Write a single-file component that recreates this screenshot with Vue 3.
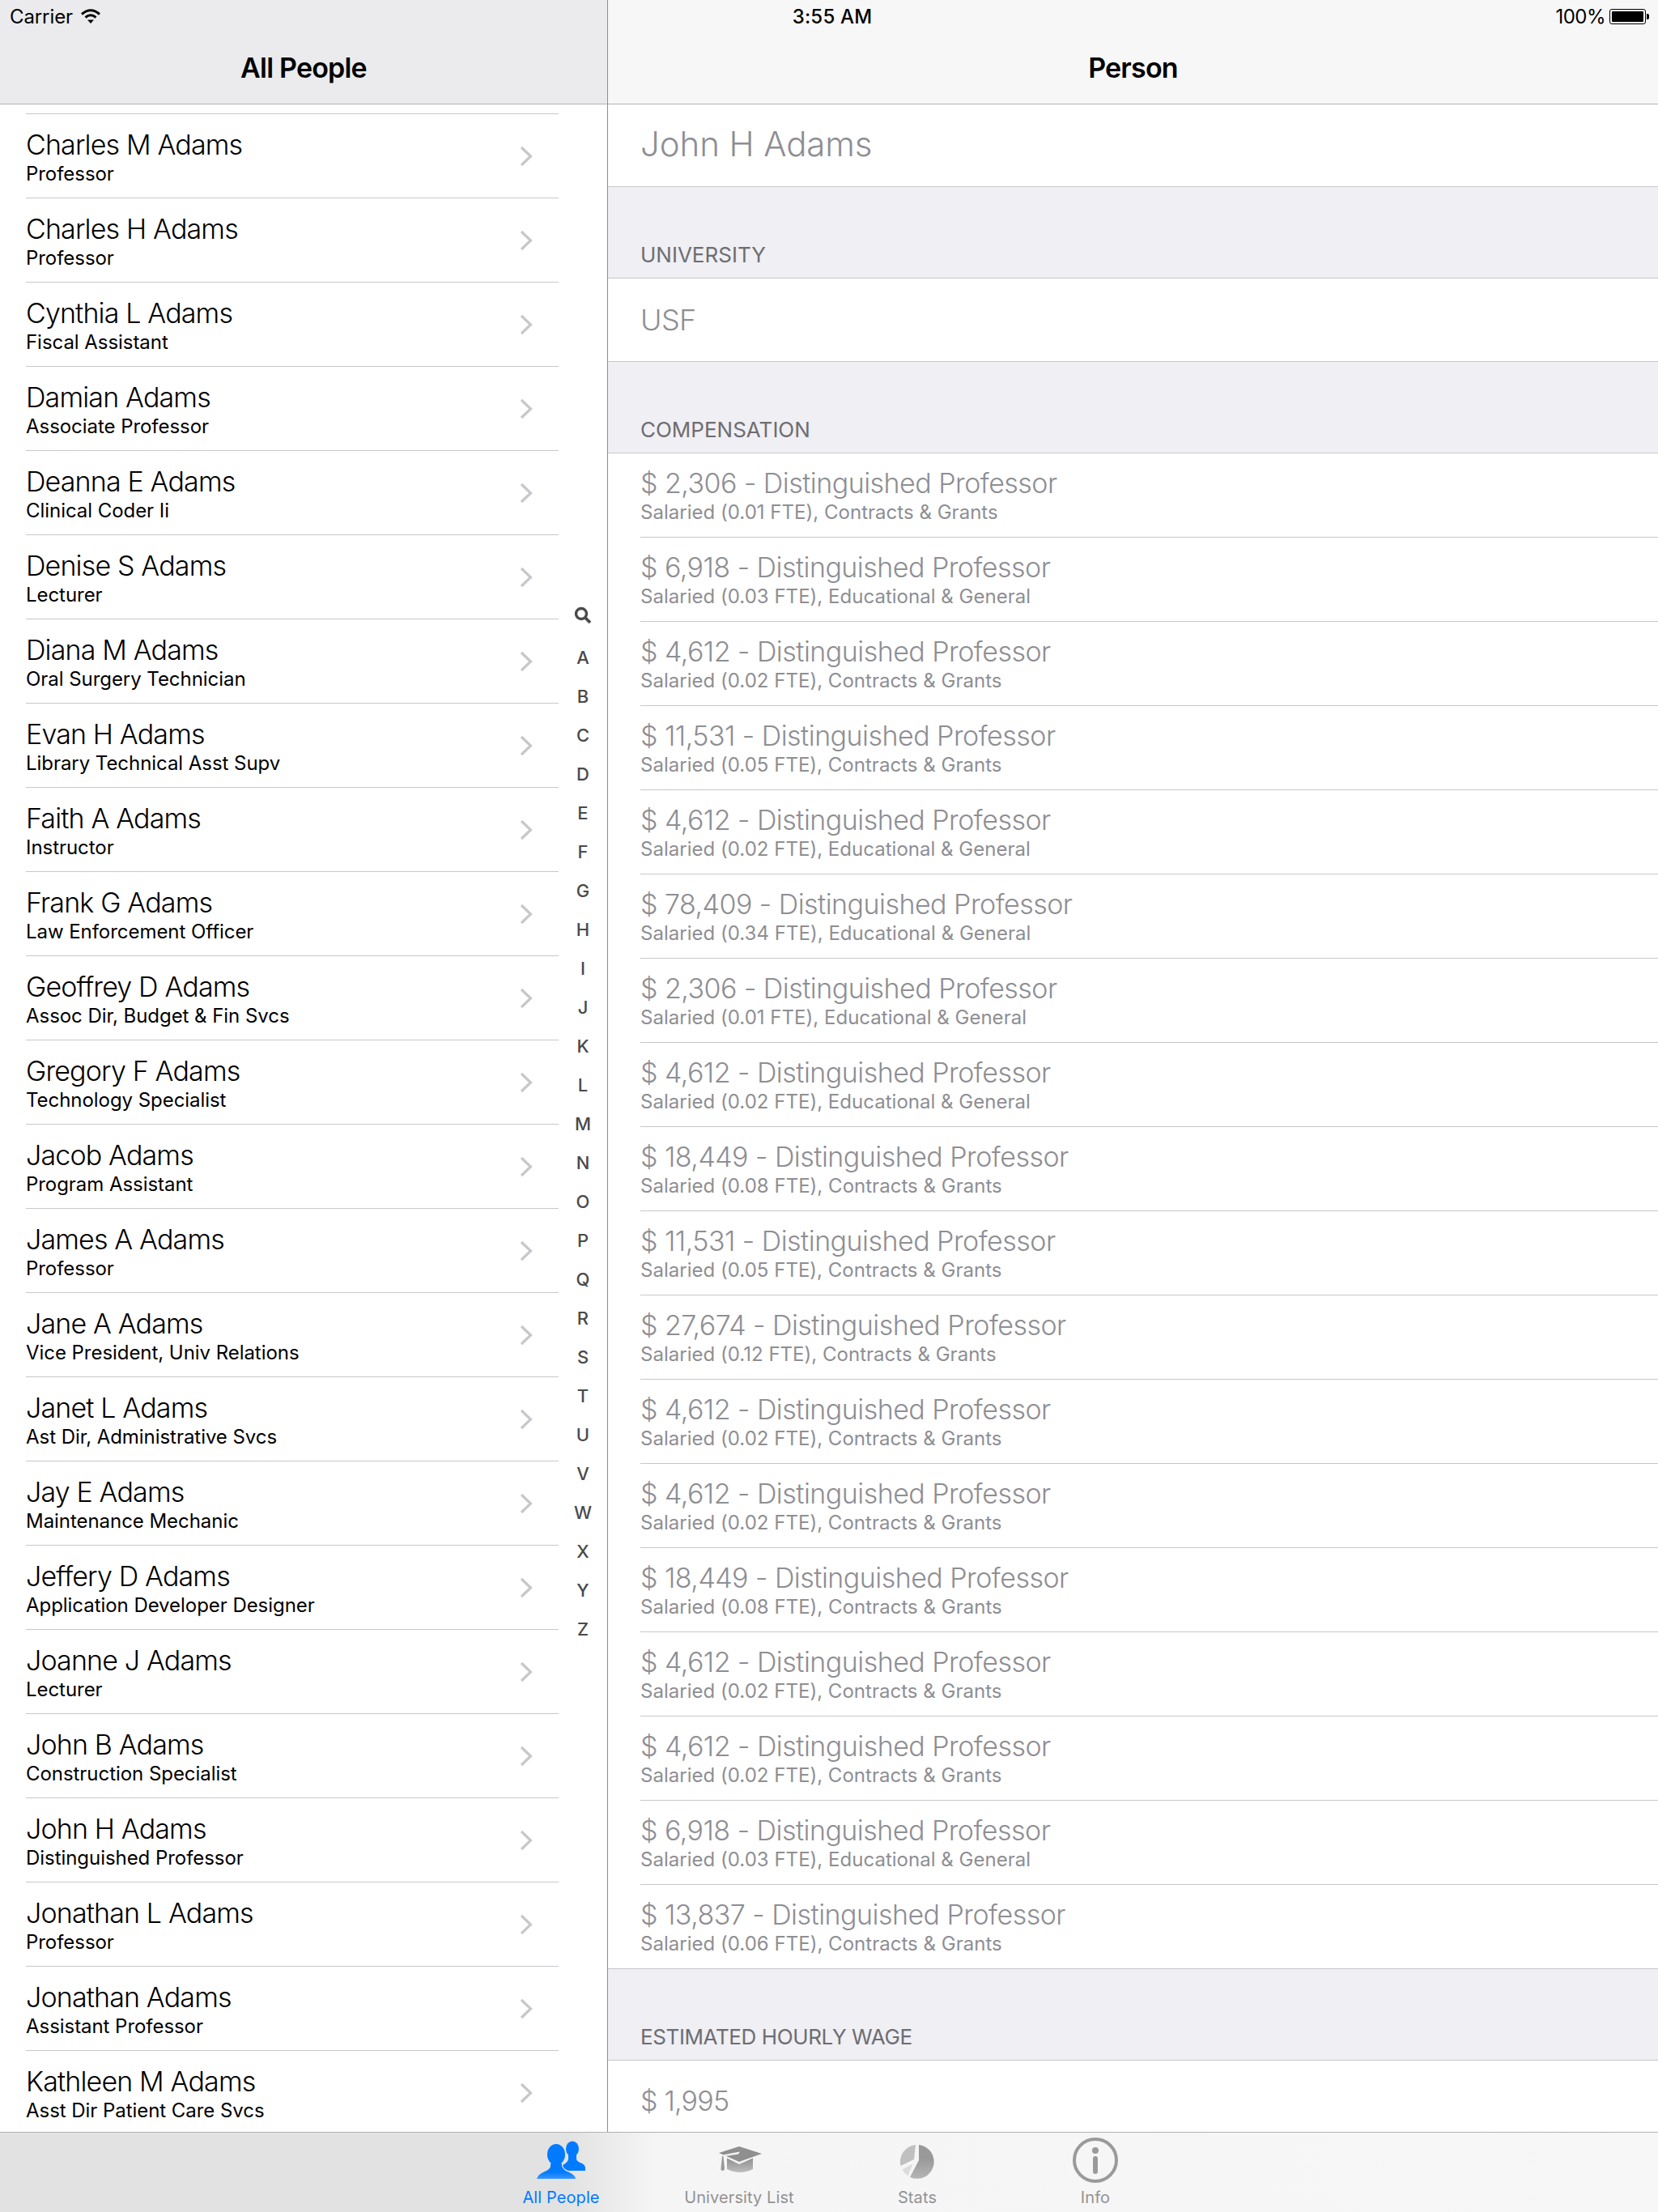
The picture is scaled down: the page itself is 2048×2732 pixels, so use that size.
<script setup>
const people = [
  ['Charles M Adams', 'Professor'], ['Charles H Adams', 'Professor'], ['Cynthia L Adams', 'Fiscal Assistant'],
  ['Damian Adams', 'Associate Professor'], ['Deanna E Adams', 'Clinical Coder Ii'], ['Denise S Adams', 'Lecturer'],
  ['Diana M Adams', 'Oral Surgery Technician'], ['Evan H Adams', 'Library Technical Asst Supv'], ['Faith A Adams', 'Instructor'],
  ['Frank G Adams', 'Law Enforcement Officer'], ['Geoffrey D Adams', 'Assoc Dir, Budget & Fin Svcs'], ['Gregory F Adams', 'Technology Specialist'],
  ['Jacob Adams', 'Program Assistant'], ['James A Adams', 'Professor'], ['Jane A Adams', 'Vice President, Univ Relations'],
  ['Janet L Adams', 'Ast Dir, Administrative Svcs'], ['Jay E Adams', 'Maintenance Mechanic'], ['Jeffery D Adams', 'Application Developer Designer'],
  ['Joanne J Adams', 'Lecturer'], ['John B Adams', 'Construction Specialist'], ['John H Adams', 'Distinguished Professor'],
  ['Jonathan L Adams', 'Professor'], ['Jonathan Adams', 'Assistant Professor'], ['Kathleen M Adams', 'Asst Dir Patient Care Svcs'],
]
const cg = 'Contracts & Grants'
const eg = 'Educational & General'
const pay = [
  ['2,306', '0.01', cg], ['6,918', '0.03', eg], ['4,612', '0.02', cg], ['11,531', '0.05', cg], ['4,612', '0.02', eg],
  ['78,409', '0.34', eg], ['2,306', '0.01', eg], ['4,612', '0.02', eg], ['18,449', '0.08', cg], ['11,531', '0.05', cg],
  ['27,674', '0.12', cg], ['4,612', '0.02', cg], ['4,612', '0.02', cg], ['18,449', '0.08', cg], ['4,612', '0.02', cg],
  ['4,612', '0.02', cg], ['6,918', '0.03', eg], ['13,837', '0.06', cg],
]
const letters = 'ABCDEFGHIJKLMNOPQRSTUVWXYZ'.split('')
</script>

<template>
  <div class="app">
    <div class="status">
      <div class="st-left">
        <span>Carrier</span>
        <svg class="wifi" width="24" height="18" viewBox="0 0 24 18">
          <path d="M1 6.5Q12 -3 23 6.5" fill="none" stroke="#000" stroke-width="3" />
          <path d="M5.5 10.5Q12 5 18.5 10.5" fill="none" stroke="#000" stroke-width="3" />
          <path d="M8 13.5H16L12 18Z" fill="#000" />
        </svg>
      </div>
      <div class="st-time">3:55 AM</div>
      <div class="st-right">
        <span>100%</span>
        <div class="batt"><div class="batt-fill"></div></div>
        <div class="nub"></div>
      </div>
    </div>

    <div class="panes">
      <section class="left">
        <header class="nav nav-left">All People</header>
        <div class="list">
          <div v-for="p in people" :key="p[0]" class="person">
            <div class="person-text">
              <div class="name">{{ p[0] }}</div>
              <div class="role">{{ p[1] }}</div>
            </div>
            <svg class="chev" width="16" height="26" viewBox="0 0 16 26">
              <path d="M2 2L13.5 13L2 24" fill="none" stroke="#c7c7cc" stroke-width="3.2" />
            </svg>
          </div>
        </div>
        <div class="index">
          <div class="idx idx-search">
            <svg width="22" height="22" viewBox="0 0 22 22">
              <circle cx="9" cy="9" r="6.5" fill="none" stroke="#4a4a4a" stroke-width="3.4" />
              <path d="M13.5 13.5L20 20" stroke="#4a4a4a" stroke-width="3.8" />
            </svg>
          </div>
          <div v-for="l in letters" :key="l" class="idx">{{ l }}</div>
        </div>
      </section>

      <section class="right">
        <header class="nav nav-right">Person</header>
        <div class="cell single first">John H Adams</div>
        <div class="sec-head">UNIVERSITY</div>
        <div class="cell single uni">USF</div>
        <div class="sec-head">COMPENSATION</div>
        <div class="pay-list">
          <div v-for="(r, i) in pay" :key="i" class="pay">
            <div class="pay-inner">
              <div class="pay-title">$ {{ r[0] }} - Distinguished Professor</div>
              <div class="pay-sub">Salaried ({{ r[1] }} FTE), {{ r[2] }}</div>
            </div>
          </div>
        </div>
        <div class="sec-head wage">ESTIMATED HOURLY WAGE</div>
        <div class="cell single last">$ 1,995</div>
      </section>
    </div>

    <nav class="tabbar">
      <div class="tab active">
        <svg class="ico" width="68" height="54" viewBox="0 0 68 54">
          <defs>
            <linearGradient id="pg" x1="0" y1="0" x2="0" y2="1">
              <stop offset="0.6" stop-color="#007aff" />
              <stop offset="1" stop-color="#3a96ff" />
            </linearGradient>
          </defs>
          <ellipse cx="48" cy="13" rx="8" ry="9.5" fill="#007aff" />
          <path d="M43 20V26Q42 30 36 33L34 40H64V37Q64 33 60 31Q54 29 53 26V20Z" fill="#007aff" />
          <path d="M21 28V34Q21 38 14 41Q6 44 4 50H52Q51 45 44 42Q36 39 35 34V28Z" fill="url(#pg)" stroke="#e2e2e3" stroke-width="2.6" paint-order="stroke" />
          <ellipse cx="28" cy="20" rx="11" ry="13" fill="#007aff" stroke="#e2e2e3" stroke-width="2.6" paint-order="stroke" />
          <rect x="21.5" y="27" width="13" height="10" fill="#007aff" />
        </svg>
        <span class="tab-label">All People</span>
      </div>
      <div class="tab">
        <svg class="ico" width="60" height="54" viewBox="-2 -7 60 54">
          <defs>
            <linearGradient id="cg" x1="0" y1="0" x2="0" y2="1">
              <stop offset="0" stop-color="#8f8f8f" />
              <stop offset="1" stop-color="#bdbdbd" />
            </linearGradient>
          </defs>
          <path d="M3 11L28 3L56 12L28 22Z" fill="#8f8f8f" />
          <path d="M8 13.5L29 9.5L27 12.5L11 15Z" fill="#f5f5f6" />
          <path d="M13 17.5L28 25L45 17.5V31Q29 39 13 31Z" fill="url(#cg)" />
          <path d="M7 15L8.5 15L10 30Q10 33 7.7 33Q5 33 5.5 30Z" fill="#9a9a9a" />
        </svg>
        <span class="tab-label">University List</span>
      </div>
      <div class="tab">
        <svg class="ico" width="48" height="54" viewBox="0 -6 48 54">
          <defs>
            <linearGradient id="sg" x1="0" y1="0" x2="0" y2="1">
              <stop offset="0.4" stop-color="#999" />
              <stop offset="1" stop-color="#b5b5b5" />
            </linearGradient>
          </defs>
          <path d="M26 2A21 21 0 1 1 15 42L26 21Z" fill="url(#sg)" />
          <path d="M22 2A21 21 0 0 0 3.6 28L20 20Z" fill="#c0c0c0" />
          <path d="M5.5 32.5A21 21 0 0 0 12.5 40.6L18.5 25.5Z" fill="#dcdcdc" />
        </svg>
        <span class="tab-label">Stats</span>
      </div>
      <div class="tab">
        <svg class="ico" width="56" height="56" viewBox="0 0 56 56">
          <circle cx="28" cy="28" r="26" fill="none" stroke="#9a9a9a" stroke-width="4" />
          <circle cx="28" cy="16" r="4" fill="#9a9a9a" />
          <rect x="25" y="23" width="6" height="22" rx="3" fill="#9a9a9a" />
        </svg>
        <span class="tab-label">Info</span>
      </div>
    </nav>
  </div>
</template>

<style scoped>
.app {
  position: relative;
  width: 2048px;
  height: 2732px;
  display: flex;
  flex-direction: column;
  overflow: hidden;
  background: #fff;
  font-family: Inter, "Liberation Sans", sans-serif;
  color: #000;
}
.status {
  position: absolute;
  top: 0;
  left: 0;
  right: 0;
  height: 40px;
  z-index: 3;
  display: grid;
  grid-template-columns: 1fr auto 1fr;
  align-items: center;
  padding: 0 11px 0 12px;
  font-size: 24px;
  letter-spacing: -0.1px;
}
.st-left { display: flex; align-items: center; gap: 10px; }
.wifi { margin-top: -1px; }
.st-time { font-weight: 500; padding-left: 7px; letter-spacing: 0.2px; }
.st-right { display: flex; align-items: center; justify-content: flex-end; letter-spacing: -0.5px; }
.batt {
  width: 45px;
  height: 19px;
  box-sizing: border-box;
  margin-left: 5px;
  border: 1px solid #000;
  border-radius: 3px;
  padding: 2px;
}
.batt-fill { width: 100%; height: 100%; background: #000; border-radius: 1px; }
.nub { width: 3px; height: 7px; margin-left: 1px; background: #000; border-radius: 0 2px 2px 0; }

.panes { flex: 1; min-height: 0; display: flex; }
.left {
  position: relative;
  width: 751px;
  box-sizing: border-box;
  border-right: 1px solid #8e8e8e;
  display: flex;
  flex-direction: column;
  overflow: hidden;
}
.right { flex: 1; min-width: 0; display: flex; flex-direction: column; background: #efeff4; overflow: hidden; }
.nav {
  height: 129px;
  flex: none;
  box-sizing: border-box;
  border-bottom: 1px solid #b2b2b2;
  padding-top: 62px;
  line-height: 44px;
  text-align: center;
  font-size: 34px;
  font-weight: 600;
  letter-spacing: -0.8px;
}
.nav-left { background: #ebebed; }
.nav-right { background: #f7f7f8; }

.list { padding-top: 11px; flex: 1; min-height: 0; }
.person {
  height: 104px;
  box-sizing: border-box;
  margin: 0 60px 0 32px;
  border-top: 1px solid #c8c7cc;
  display: flex;
  align-items: center;
  justify-content: space-between;
}
.name { font-size: 34px; line-height: 44px; letter-spacing: -0.85px; font-weight: 350; }
.role { font-size: 24px; line-height: 28px; letter-spacing: -0.05px; }
.chev { margin-right: 32px; }

.index {
  position: absolute;
  top: 736px;
  right: 6px;
  width: 48px;
}
.idx {
  height: 48px;
  display: flex;
  align-items: center;
  justify-content: center;
  font-size: 22px;
  font-weight: 500;
  color: #4a4a4a;
}
.idx-search { margin-bottom: 4px; }

.cell { background: #fff; box-sizing: border-box; padding-left: 40px; color: #8e8e93; display: flex; align-items: center; font-weight: 350; }
.single { height: 103px; border-bottom: 1px solid #c8c7cc; font-size: 34px; letter-spacing: -0.8px; }
.first { height: 102px; padding-bottom: 4px; font-size: 42px; letter-spacing: -0.1px; }
.uni { font-size: 36px; letter-spacing: -0.6px; }
.last { border-bottom: 0; flex: 1; padding-top: 10px; }
.sec-head {
  height: 113px;
  box-sizing: border-box;
  padding: 0 0 13px 40px;
  display: flex;
  align-items: flex-end;
  font-size: 26px;
  color: #6d6d72;
  border-bottom: 1px solid #c8c7cc;
}
.wage { letter-spacing: -0.4px; }
.pay-list { background: #fff; }
.pay { height: 104px; box-sizing: border-box; padding-left: 40px; }
.pay-inner {
  height: 100%;
  box-sizing: border-box;
  padding-bottom: 2px;
  border-bottom: 1px solid #c8c7cc;
  color: #8e8e93;
  display: flex;
  flex-direction: column;
  justify-content: center;
}
.pay:last-child { padding-left: 0; }
.pay:last-child .pay-inner { padding-left: 40px; }
.pay-title { font-size: 34px; line-height: 44px; letter-spacing: -0.53px; font-weight: 350; }
.pay-sub { font-size: 24px; line-height: 28px; letter-spacing: 0.02px; }

.tabbar {
  flex: none;
  height: 99px;
  box-sizing: border-box;
  border-top: 1px solid #b2b2b2;
  display: flex;
  justify-content: center;
  padding-right: 2px;
  background: linear-gradient(90deg, #e2e2e3 0, #e2e2e3 700px, #f5f5f6 810px, #f7f7f8 100%);
}
.tab {
  width: 220px;
  height: 98px;
  display: flex;
  flex-direction: column;
  align-items: center;
  color: #929292;
  padding-top: 6px;
  box-sizing: border-box;
}
.active { color: #007aff; }
.ico { height: 56px; flex: none; }
.tab-label { font-size: 20px; line-height: 24px; margin-top: 6px; letter-spacing: 0.1px; }
</style>
